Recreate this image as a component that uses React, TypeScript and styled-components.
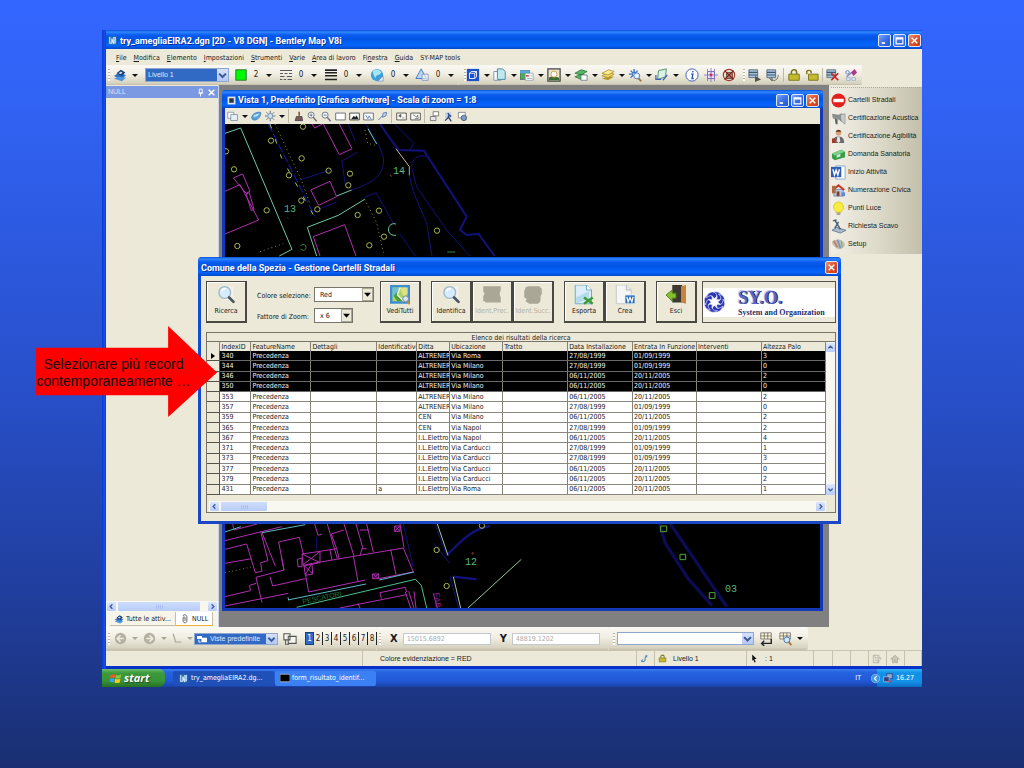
import React from "react";
import styled, { createGlobalStyle, css } from "styled-components";

const UI = '"DejaVu Sans Condensed", "DejaVu Sans", sans-serif';
const SANS = '"Liberation Sans", Arial, sans-serif';
const TITLE = 'Roboto, "Open Sans", sans-serif';
const BEIGE = "#ece9d8";

const GlobalStyle = createGlobalStyle`
  * { box-sizing: border-box; }
  body { margin: 0; font-family: ${UI}; font-size: 7px; line-height: 10px; color: #1a1a1a; }
  button, input, select { font: inherit; color: inherit; margin: 0; padding: 0; border: 0; background: none; border-radius: 0; }
  svg { display: block; flex: none; }
`;

const Slide = styled.div`
  position: relative;
  min-height: 100vh;
  padding: 30px 102px;
  background: linear-gradient(180deg, #3366ff 0%, #3163f5 12%, #2850cb 50%, #1f3c98 80%, #1a2f72 100%);
`;

const Screen = styled.div`
  position: relative;
`;

const AppWindow = styled.div`
  padding: 0 0 3px 4px;
  background: linear-gradient(90deg, #0a3ad8, #1a50e8 3px, #0831c9 4px);
`;

const TitleBar = styled.div<{ $h?: number }>`
  display: flex;
  align-items: center;
  gap: 2px;
  height: ${(p) => p.$h ?? 19}px;
  padding: 2px 1px 0 1px;
  color: #fff;
  font: 700 9px/12px ${TITLE};
  text-shadow: 1px 1px 0 #0a2f9c;
  background: linear-gradient(180deg, #0a50d8 0, #2f86ff 2px, #0b5cf0 5px, #0054e3 9px, #0566ff 15px, #0348c8 100%);
  span { flex: 1; white-space: nowrap; overflow: hidden; }
`;

const TitleButtons = styled.div`
  display: flex;
  gap: 2px;
`;

const WinButton = styled.button<{ $close?: boolean }>`
  width: 13px;
  height: 13px;
  border: 1px solid #dfe8fb;
  border-radius: 2px;
  background: ${(p) => (p.$close ? "linear-gradient(135deg,#f0906c,#e0512c 50%,#c23c18)" : "linear-gradient(135deg,#7da4f8,#3c71ea 50%,#2556cc)")};
  svg { margin: 1px; }
`;

const MenuBar = styled.nav`
  display: flex;
  gap: 7px;
  height: 16px;
  align-items: center;
  padding: 2px 0 0 10px;
  background: ${BEIGE};
`;

const MenuItem = styled.button`
  white-space: nowrap;
  u { text-underline-offset: 1px; }
`;

const Bar = styled.div`
  display: flex;
  background: ${BEIGE};
`;

const BarGroup = styled.div<{ $h?: number; $gap?: number; $lead?: number; $trail?: number }>`
  display: flex;
  align-items: center;
  gap: ${(p) => p.$gap ?? 2}px;
  height: ${(p) => p.$h ?? 20}px;
  padding: 0 ${(p) => p.$trail ?? 0}px 0 ${(p) => p.$lead ?? 2}px;
  border-radius: 0 2px 2px 0;
  background: linear-gradient(180deg, #faf9f4 0%, #f1efe3 45%, #d6d2bf 92%, #bfbba6 100%);
`;

const Grip = styled.i`
  width: 2px;
  height: 12px;
  background: repeating-linear-gradient(180deg, #b8b4a0 0 1px, #fff 1px 3px);
`;

const Sep = styled.i<{ $m?: number }>`
  width: 1px;
  height: 14px;
  margin: 0 ${(p) => p.$m ?? 0}px;
  background: #bdb9a6;
`;

const IconButton = styled.button<{ $w?: number }>`
  display: flex;
  align-items: center;
  justify-content: center;
  flex: none;
  width: ${(p) => p.$w ?? 16}px;
  height: 16px;
`;

const Caret = styled.i<{ $light?: boolean }>`
  flex: none;
  width: 9px;
  display: flex;
  justify-content: center;
  &::after {
    content: "";
    border: 3px solid transparent;
    border-top-color: ${(p) => (p.$light ? "#aaa696" : "#111")};
    border-bottom: 0;
  }
`;

const ValueTool = styled.button`
  display: flex;
  align-items: center;
  width: 45px;
  height: 16px;
  font-size: 8px;
  span { width: 16px; text-align: center; }
  svg { margin: 0 1px; }
`;

const DropTool = styled.button`
  display: flex;
  align-items: center;
  width: 27px;
  height: 16px;
  gap: 2px;
`;

const SelectBox = styled.span<{ $w: number; $h: number; $kind?: "blue" | "plain"; $icon?: boolean; $before?: number; $after?: number }>`
  position: relative;
  display: inline-flex;
  flex: none;
  width: ${(p) => p.$w}px;
  height: ${(p) => p.$h}px;
  margin: 0 ${(p) => p.$after ?? 0}px 0 ${(p) => p.$before ?? 0}px;
  select {
    appearance: none;
    width: 100%;
    height: 100%;
    padding: 0 12px 0 ${(p) => (p.$icon ? 15 : p.$kind === "plain" ? 5 : 2)}px;
    border: 1px solid ${(p) => (p.$kind === "plain" ? "#77746a" : "#8da7d0")};
    background: #fff;
    outline: none;
    ${(p) => p.$kind === "blue" && css`
      color: #dfe9fb;
      background: #316ac5;
      font-family: ${SANS};
    `}
  }
  svg { position: absolute; pointer-events: none; left: 3px; top: 1px; }
  svg:last-child {
    left: auto;
    right: 1px;
    height: calc(100% - 2px);
    width: 11px;
    background: ${(p) => (p.$kind === "plain" ? BEIGE : "linear-gradient(180deg,#d6e2fc,#b4c8f6)")};
    border: ${(p) => (p.$kind === "plain" ? "1px solid #aaa797" : "0")};
  }
`;

const Workspace = styled.div`
  display: grid;
  grid-template-columns: 113px minmax(0, 1fr) 93px;
  background: ${BEIGE};
`;

const LeftPanel = styled.aside`
  display: flex;
  flex-direction: column;
  border-right: 1px solid #c9d4ea;
  background: ${BEIGE};
`;

const PanelHeader = styled.header`
  display: flex;
  align-items: center;
  justify-content: space-between;
  height: 12px;
  margin-top: 1px;
  padding: 0 2px;
  color: #d8e2fa;
  background: #7b98e2;
  font-family: ${SANS};
`;

const PanelTools = styled.span`
  display: flex;
  gap: 2px;
`;

const PanelBody = styled.div`
  flex: 1;
`;

const HScroll = styled.div`
  display: flex;
  align-items: center;
  gap: 2px;
  height: 11px;
  padding: 0 1px;
  background: #f8f7f0;
`;

const ScrollButton = styled.button<{ $h?: number }>`
  display: grid;
  place-items: center;
  flex: none;
  width: 9px;
  height: ${(p) => p.$h ?? 9}px;
  border-radius: 1px;
  background: linear-gradient(180deg, #dbe6fe, #b9cdf8);
`;

const Thumb = styled.i<{ $w?: number }>`
  ${(p) => (p.$w ? `width: ${p.$w}px;` : "flex: 1; margin-right: 6px;")}
  display: flex;
  justify-content: center;
  align-items: center;
  height: 9px;
  border-radius: 1px;
  background: linear-gradient(180deg, #cdddfd, #b8ccf8);
  &::after { content: ""; width: 7px; height: 4px; background: repeating-linear-gradient(90deg, #a9c0f0 0 1px, transparent 1px 2px); }
`;

const Tabs = styled.div`
  display: flex;
  height: 15px;
  padding: 0 0 0 4px;
  background: #f7f5ea;
`;

const Tab = styled.button<{ $on?: boolean }>`
  display: flex;
  align-items: center;
  gap: 2px;
  height: 14px;
  padding: 0 4px;
  white-space: nowrap;
  border: solid #c2beaa;
  border-width: 0 1px 1px 0;
  ${(p) => p.$on && css`background: #fff; border-bottom: 1px solid #f0b030;`}
`;

const Mdi = styled.main`
  padding: 5px 6px 16px 3px;
  background: #808080;
`;

const ViewWindow = styled.section`
  padding: 0 3px 3px;
  background: #1238b8;
  border-radius: 4px 4px 0 0;
  & > div:first-child { margin: 0 -3px; padding: 2px 4px 0 5px; border-radius: 4px 4px 0 0; }
`;

const ViewTools = styled.div`
  display: flex;
  align-items: center;
  height: 16px;
  padding-left: 1px;
  background: ${BEIGE};
`;

const MapCanvas = styled.svg`
  width: 100%;
  height: 484px;
  background: #000;
`;

const Sidebar = styled.aside`
  padding: 2px 0 0 2px;
  background: ${BEIGE};
`;

const SideList = styled.div`
  display: flex;
  flex-direction: column;
  padding: 3px 0 1px;
  border-top: 1px dotted #b5a9a0;
  background: linear-gradient(90deg, #f1efe5, #dedbcb 50%, #c3bfaa);
`;

const SideItem = styled.button`
  display: flex;
  align-items: center;
  gap: 2px;
  height: 18px;
  text-align: left;
  white-space: nowrap;
  font: 7px/10px ${SANS};
`;

const Pager = styled.div`
  display: flex;
  margin-left: 3px;
`;

const PageButton = styled.button<{ $on?: boolean }>`
  width: 9px;
  height: 13px;
  border-right: 1px solid #222;
  font-size: 8px;
  ${(p) => p.$on && css`background: #316ac5; color: #fff; border: 1px solid #1c3c80;`}
`;

const Coord = styled.label`
  display: flex;
  align-items: center;
  gap: 5px;
  font: 700 11px/12px ${UI};
  margin-left: 7px;
  input {
    width: 88px;
    height: 12px;
    padding: 0 3px;
    border: 1px solid #c3c8cc;
    background: #fff;
    color: #aaa;
    font: 7px/10px ${UI};
  }
`;

const StatusBar = styled.footer`
  display: flex;
  height: 16px;
  border-top: 1px solid #c9c5b2;
  background: ${BEIGE};
  font: 7px/15px ${SANS};
`;

const StatusCell = styled.div<{ $w?: number; $pad?: number }>`
  display: flex;
  align-items: center;
  gap: 6px;
  ${(p) => (p.$w ? `width: ${p.$w}px;` : "flex: 1;")}
  padding-left: ${(p) => p.$pad ?? 3}px;
  border-right: 1px solid #c5c1ae;
  white-space: nowrap;
`;

const TaskBar = styled.div`
  display: flex;
  align-items: center;
  height: 18px;
  color: #fff;
  background: linear-gradient(180deg, #3a80f0 0, #2663e0 3px, #2058d8 12px, #1941a5 100%);
`;

const StartButton = styled.button`
  display: flex;
  align-items: center;
  gap: 2px;
  width: 63px;
  height: 18px;
  margin-right: 8px;
  padding-left: 8px;
  border-radius: 0 6px 6px 0;
  font: italic 700 11px/14px "Open Sans", sans-serif;
  text-shadow: 1px 1px 1px #1b4d1b;
  background: linear-gradient(180deg, #6cbc6c 0, #3c9a3c 4px, #379437 12px, #256f25 100%);
`;

const Task = styled.button<{ $on?: boolean }>`
  display: flex;
  align-items: center;
  gap: 2px;
  width: 101px;
  height: 15px;
  margin-right: 1px;
  padding-left: 5px;
  border-radius: 2px;
  white-space: nowrap;
  background: ${(p) => (p.$on ? "#3c81f3" : "#1e50b8")};
`;

const Tray = styled.div`
  display: flex;
  align-items: center;
  gap: 3px;
  height: 18px;
  width: 45px;
  background: linear-gradient(180deg, #35b4f4 0, #1290e8 4px, #1290e8 13px, #0d6cc0 100%);
  svg:first-child { margin-left: -6px; }
`;

const Lang = styled.span`
  margin: 0 16px 0 auto;
`;

/* Dialog */

const Dialog = styled.section`
  position: absolute;
  top: 227px;
  left: 96px;
  right: 81px;
  padding: 0 3px 3px;
  border-radius: 4px 4px 0 0;
  background: linear-gradient(180deg, #0a50d8, #1b46c4);
  & > div:first-child { margin: 0 -3px; padding: 2px 3px 0 3px; border-radius: 4px 4px 0 0; }
`;

const DialogBody = styled.div`
  padding: 5px 2px 8px 5px;
  background: ${BEIGE};
`;

const DialogTools = styled.div`
  display: flex;
  height: 42px;
`;

const ToolGroup = styled.div<{ $gap?: number }>`
  display: flex;
  flex: none;
  margin-right: ${(p) => p.$gap ?? 10}px;
`;

const BigButton = styled.button`
  display: flex;
  flex-direction: column;
  align-items: center;
  justify-content: space-between;
  width: 41px;
  height: 42px;
  padding: 3px 0 5px;
  border: solid #4a4842;
  border-width: 1px 2px 2px 1px;
  box-shadow: inset 1px 1px 0 #fff;
  background: ${BEIGE};
  white-space: nowrap;
  line-height: 9px;
  &:disabled { color: #b4b1a0; }
`;

const Fields = styled.div`
  display: grid;
  grid-template-columns: 57px 60px;
  grid-template-rows: 15px 15px;
  row-gap: 6px;
  padding-top: 6px;
  margin-right: 6px;
  label { padding-top: 4px; white-space: nowrap; }
`;

const LogoBox = styled.div`
  flex: 1;
  display: flex;
  align-items: center;
  border: 1px solid #55534c;
`;

const LogoInner = styled.div`
  display: flex;
  align-items: center;
  gap: 12px;
  width: 100%;
  height: 29px;
  background: #fff;
`;

const LogoText = styled.div`
  display: flex;
  flex-direction: column;
  font: 700 8px/9px "Liberation Serif", serif;
  color: #26306c;
  white-space: nowrap;
  strong {
    font-size: 18px;
    line-height: 20px;
    color: #5866c4;
    text-shadow: 1px 0 0 #1c2350, -1px -1px 0 #c5cbee;
  }
`;

const GridBox = styled.div`
  margin-top: 9px;
  border: 1px solid #77746a;
  background: ${BEIGE};
`;

const GridTitle = styled.div`
  height: 9px;
  text-align: center;
  line-height: 10px;
  border-bottom: 1px solid #77746a;
`;

const GridRow = styled.div`
  display: flex;
`;

const DataTable = styled.table`
  flex: 1;
  width: 0;
  height: 153px;
  table-layout: fixed;
  border-collapse: collapse;
  th, td {
    padding: 0 0 0 1px;
    overflow: hidden;
    white-space: nowrap;
    text-align: left;
    font-weight: 400;
    line-height: 8px;
    border-right: 1px solid #85827a;
  }
  th { height: 9px; }
`;

const Row = styled.tr<{ $sel?: boolean }>`
  background: ${(p) => (p.$sel ? "#000" : "#fff")};
  color: ${(p) => (p.$sel ? "#f0f0f0" : "#1a1a1a")};
  td { border-bottom: 1px solid ${(p) => (p.$sel ? "#6a6a6a" : "#8a877e")}; }
  td:first-child { background: ${BEIGE}; color: #000; padding: 0 0 0 4px; border-color: #55534c; }
`;

const VScroll = styled.div`
  display: flex;
  flex-direction: column;
  justify-content: space-between;
  width: 9px;
  padding-top: 1px;
  background: #f8f7f2;
`;

const GridFoot = styled.div`
  display: flex;
  padding: 6px 9px 0 2px;
  & > div { flex: 1; }
`;

const Spring = styled.i`
  flex: 1;
`;

const Arrow = styled.div`
  position: absolute;
  top: 326px;
  left: 36px;
  display: flex;
  align-items: center;
  justify-content: center;
  width: 181px;
  height: 91px;
  padding: 2px 26px 0 0;
  background: #fe0000;
  clip-path: polygon(0 24%, 73% 24%, 73% 0, 100% 51%, 73% 100%, 73% 76%, 0 76%);
`;

const ArrowText = styled.p`
  margin: 0;
  text-align: center;
  white-space: nowrap;
  color: #111;
  font: 14px/17px "Liberation Sans", Arial, sans-serif;
`;

/* Icons, all on a 16 unit grid */

const icons: Record<string, React.ReactNode> = {
  app: <><path d="M2 2h12v12H2z" fill="#2d6fa8" /><path d="M4 3v9h3V5l3 8V3m2 0v9" stroke="#cfeaff" strokeWidth="1.6" fill="none" /></>,
  view: <><path d="M1 1h14v14H1z" fill="#dfe6ef" /><path d="M4 4h8v8H4z" fill="#2b3340" /></>,
  min: <path d="M3 11h6v3H3z" fill="#fff" />,
  max: <path d="M2 3h12v11H2zM2 5h12" stroke="#fff" strokeWidth="2" fill="none" />,
  close: <path d="M3 3l10 10M13 3L3 13" stroke="#fff" strokeWidth="2.6" />,
  pin: <path d="M6 2h5v7H6zM4 9h9M8 9v6" stroke="#fff" strokeWidth="1.6" fill="none" />,
  left: <path d="M10 3L5 8l5 5" stroke="#3c5a94" strokeWidth="3" fill="none" />,
  right: <path d="M6 3l5 5-5 5" stroke="#3c5a94" strokeWidth="3" fill="none" />,
  up: <path d="M3 10l5-5 5 5" stroke="#3c5a94" strokeWidth="3" fill="none" />,
  down: <path d="M3 6l5 5 5-5" stroke="#3c5a94" strokeWidth="3" fill="none" />,
  active: <><path d="M1 9l5-3 9 2-5 5z" fill="#2f6fc0" /><path d="M1 12l5-2 9 1-5 4z" fill="#4d94dd" /><path d="M4 6l5-4 5 3-4 4z" fill="#17366e" /><path d="M6 6l3-2 2 1-2 2z" fill="#bcd8f4" /></>,
  green: <path d="M1 1h14v14H1z" fill="#00f800" stroke="#1c5a1c" />,
  dash: <path d="M0 2h16M0 6h4m2 0h4m2 0h4M0 10h6m3 0h7M0 14h3m2 0h3m2 0h6" stroke="#555" strokeWidth="1.3" />,
  weight: <path d="M0 1.5h16M0 5h16M0 9h16M0 14h16" stroke="#222" strokeWidth="2.2" />,
  globe: <><circle cx="8" cy="8" r="7" fill="#3b9fd8" /><path d="M3 4c4-4 8-2 10 1-2 4-6 2-6 5s-3 0-4-6z" fill="#a9e6f0" /><path d="M9 15l6-6v6z" fill="#e8eef6" stroke="#6b86b8" strokeWidth=".8" /></>,
  viewglobe: <><path d="M1 9C2 4 8 1 14 2c1 4-2 9-7 11-4 1-6-1-6-4z" fill="#58a4dc" stroke="#3a6ea8" /><path d="M3 8c2-3 6-4 9-4-2 4-5 5-9 4z" fill="#c4e6f6" /></>,
  tri: <><path d="M7 1l6 11H1z" fill="#bcd6f6" stroke="#3c6fc0" /><path d="M8 7h7v7H8z" fill="#fff" fillOpacity=".6" stroke="#7a94c0" /></>,
  cube: <><path d="M1 1h14v14H1z" fill="#1c51c8" /><path d="M4 6h6v6H4zM4 6l2-2h6v6l-2 2M10 6l2-2" stroke="#fff" strokeWidth="1" fill="none" /></>,
  doc: <><path d="M1 4h8v10H1z" fill="#fff" stroke="#7a8ca8" /><path d="M5 1h6l3 3v9H5z" fill="#bfe9ef" stroke="#3d7f98" /></>,
  refs: <><path d="M0 3h11v10H0z" fill="#4fa860" stroke="#456" strokeWidth=".8" /><path d="M0 3h11v3H0z" fill="#58a8e0" /><path d="M6 6h9v8H6z" fill="#fff" stroke="#789" strokeWidth=".7" /><path d="M7 8h3v2H7z" fill="#d44" /><path d="M11 9h3m-6 3h6" stroke="#89a" strokeWidth=".8" /></>,
  raster: <><path d="M1 1h14v14H1z" fill="#e9e4cc" stroke="#444" strokeWidth="1.4" /><path d="M2 11l4-2 8 2v3H2z" fill="#3d6b35" /><circle cx="8" cy="7" r="3.5" fill="#fff" stroke="#caa040" /></>,
  points: <><path d="M1 6l7-4 7 2-7 4zM1 10l7-3 7 2-7 4z" fill="#52b862" stroke="#256c34" strokeWidth=".8" /><path d="M8 8h7v6H8z" fill="#fff" stroke="#567" strokeWidth=".8" /></>,
  layers: <><path d="M1 12l8-3 6 1-7 4z" fill="#b89a2c" /><path d="M1 9l8-4 6 2-7 4z" fill="#f0d860" stroke="#a4862a" strokeWidth=".8" /><path d="M1 6l8-4 6 2-7 4z" fill="#fbeb92" stroke="#a4862a" strokeWidth=".8" /></>,
  burst: <><path d="M7 1v5M1 7h5M3 3l3 3M11 3L8 6M3 11l3-3" stroke="#3b74c0" strokeWidth="1.6" /><circle cx="10" cy="9" r="3.4" fill="#e6f2ff" stroke="#456fb0" /><path d="M12 12l3 3" stroke="#8a6a3a" strokeWidth="2" /></>,
  map3d: <><path d="M4 3l9-2-1 9-9 3z" fill="#dff0e6" stroke="#3f8a62" /><path d="M1 8v5h6M9 14l5-6" stroke="#3e63b8" strokeWidth="1.4" fill="none" /></>,
  info: <><circle cx="8" cy="8" r="7" fill="#fff" stroke="#3c63b8" strokeWidth="1.1" /><path d="M9 3.5v1.600M7 7h2l-1 5h2" stroke="#2a4fae" strokeWidth="1.5" fill="none" /></>,
  accu: <><path d="M4 4h8v8H4z" fill="#e6dff6" stroke="#6a61b0" /><path d="M8 0v16M0 8h16M4 1v3m8-3v3M4 12v3m8-3v3" stroke="#8a76c0" /><circle cx="8" cy="8" r="1.6" fill="#d03060" /></>,
  nosnap: <><path d="M5 5h7v7H5z" fill="#b87a6a" stroke="#5a2a20" strokeWidth=".8" /><circle cx="8" cy="8" r="6.5" fill="none" stroke="#a23a30" strokeWidth="1.3" /><path d="M3 3l10 10M13 3L3 13" stroke="#6e2018" strokeWidth="1.2" /></>,
  db: <><path d="M1 2h10v9H1z" fill="#a8c4dc" stroke="#3d5368" strokeWidth=".8" /><path d="M1 5h10M1 8h10" stroke="#3d5670" strokeWidth="1.2" /><path d="M8 9l7 4-7 3z" fill="#555" /></>,
  db2: <><path d="M1 2h10v9H1z" fill="#a8c4dc" stroke="#3d5368" strokeWidth=".8" /><path d="M1 5h10M1 8h10" stroke="#3d5670" strokeWidth="1.2" /><path d="M6 13c4 3 8 0 8-5M4 12l3-1v4z" stroke="#666" fill="none" /></>,
  lock: <><path d="M5 7V5a3 3 0 016 0v2" stroke="#7a7420" strokeWidth="1.8" fill="none" /><path d="M2 7h12v7H2z" fill="#c3b92c" stroke="#77701a" /></>,
  unlock: <><path d="M2 7V4a3 3 0 015 0v2" stroke="#7a7420" strokeWidth="1.6" fill="none" /><path d="M4 7h11v7H4z" fill="#c3b92c" stroke="#77701a" /></>,
  dbx: <><path d="M1 2h10v9H1z" fill="#a8c4dc" stroke="#3d5368" strokeWidth=".8" /><path d="M1 5h10M1 8h10" stroke="#3d5670" strokeWidth="1.2" /><path d="M6 6l8 8M14 6l-8 8" stroke="#d02020" strokeWidth="2" /></>,
  tools: <><path d="M3 10l6-5" stroke="#8a8ac0" strokeWidth="1.6" /><path d="M8 5l4-4 3 4-4 4z" fill="#b0398c" /><circle cx="4" cy="5" r="2" fill="#e8ecf8" stroke="#5a76c0" /><path d="M9 11h4v3H9zM3 11h4v3H3z" fill="#e8eef8" stroke="#8a9ac0" strokeWidth=".8" /></>,
  pages: <><path d="M1 3h8v8H1z" fill="#fff" stroke="#7888a0" /><path d="M5 6h9v8H5z" fill="#e8eef8" stroke="#7888a0" /></>,
  brushsm: <><path d="M9 1v6" stroke="#8a5a2a" strokeWidth="2.4" /><path d="M5 8h8l1 6H3z" fill="#7a5a58" stroke="#3d3338" /></>,
  sun: <><circle cx="7" cy="8" r="3.4" fill="#cfe0f4" stroke="#5a7898" /><path d="M7 1v3m0 8v3M0 8h3m8 0h3M2 3l2 2m6 6l2 2M2 13l2-2m6-6l2-2" stroke="#5a6a80" strokeWidth="1.2" /></>,
  zin: <><circle cx="6" cy="6" r="4.4" fill="#eef6ff" stroke="#6a7078" strokeWidth="1.3" /><path d="M4 6h4M6 4v4" stroke="#446" /><path d="M9 9l5 6" stroke="#777" strokeWidth="2.2" /></>,
  zout: <><circle cx="6" cy="6" r="4.4" fill="#eef6ff" stroke="#6a7078" strokeWidth="1.3" /><path d="M4 6h4" stroke="#446" /><path d="M9 9l5 6" stroke="#777" strokeWidth="2.2" /></>,
  rect: <path d="M1 3h14v10H1z" fill="#fff" stroke="#555a70" strokeWidth="1.2" />,
  fit: <><path d="M1 3h14v10H1z" fill="#fff" stroke="#333" strokeWidth="1.2" /><path d="M3 12l4-5 2 2 2-3 3 6z" fill="#222" /></>,
  fitb: <><path d="M1 3h14v10H1z" fill="#fff" stroke="#555a70" strokeWidth="1.2" /><path d="M4 6l3 5 2-4 3 5" fill="none" stroke="#5577b0" strokeWidth="1.3" /></>,
  wand: <path d="M2 13l6-6M8 7l1-4 5-1-1 5-5 2z" fill="#c4d8f4" stroke="#5a74a8" strokeWidth="1.3" />,
  prev: <><path d="M1 3h14v10H1z" fill="#f8f8f4" stroke="#444" strokeWidth="1.2" /><path d="M4 7l3-2v4zM9 10h3" fill="#333" stroke="#555" /></>,
  next: <><path d="M1 3h14v10H1z" fill="#f8f8f4" stroke="#444" strokeWidth="1.2" /><path d="M4 5l6 4 1-3 1 5-5 0" fill="none" stroke="#555" /></>,
  copyv: <><path d="M6 1h8v6H6z" fill="#fff" stroke="#555" /><path d="M2 8h8v6H2z" fill="#e9e5f0" stroke="#555" /></>,
  walk: <><path d="M3 2h9v8H3z" fill="#bcd2ee" /><path d="M7 3l2 3-2 4-4 4M9 6l3 2M8 9l4 6" stroke="#25406f" strokeWidth="1.8" fill="none" /></>,
  clip: <><path d="M2 2h10v8H2z" fill="#fff" stroke="#667" /><circle cx="10" cy="10" r="4" fill="#7a9cc8" stroke="#445" /></>,
  back: <><circle cx="8" cy="8" r="7" fill="#b4b1a2" /><path d="M12 8H5m3-4L4 8l4 4" stroke="#eeece0" strokeWidth="2" fill="none" /></>,
  fwd: <><circle cx="8" cy="8" r="7" fill="#b4b1a2" /><path d="M4 8h7M8 4l4 4-4 4" stroke="#eeece0" strokeWidth="2" fill="none" /></>,
  axis: <path d="M3 1l3 11h8" stroke="#aaa696" strokeWidth="1.6" fill="none" />,
  views: <><path d="M1 2h7v7H1zM6 5h9v8H6zM3 9v5h4" fill="#f6f4ec" stroke="#555" strokeWidth="1.2" /></>,
  viewset: <><path d="M0 3h8v5H0zM7 6h9v7H7z" fill="#fff" /><path d="M3 9v4h3" stroke="#fff" strokeWidth="1.5" fill="none" /></>,
  keyin: <><path d="M2 1h12v7H2zM2 4.500h12M6 1v7M10 1v7" fill="#fff6d8" stroke="#555" strokeWidth=".8" /><path d="M14 8v5H3m3-3l-3 3 3 3" stroke="#222" strokeWidth="1.6" fill="none" /></>,
  keyfind: <><path d="M1 1h12v7H1zM1 4.500h12M5 1v7M9 1v7" fill="#fff6d8" stroke="#555" strokeWidth=".8" /><circle cx="9" cy="9" r="3.400" fill="#cfe8ff" stroke="#3a6ea8" /><path d="M11 11l3 4" stroke="#a8702c" strokeWidth="2" /></>,
  link: <path d="M2 13c6 2 8-2 7-6l4-4M2 13l3-3M13 3l-4 1" stroke="#4d8ac8" strokeWidth="2" fill="none" />,
  cursor: <path d="M4 1l8 8H8l2 5-2 1-2-5-2 2z" fill="#111" />,
  saveg: <path d="M2 2h9v12H2zM5 2v4h5M11 6h3v3M5 10h5v4" fill="#e4e1d2" stroke="#a5a294" />,
  homeg: <path d="M1 8l7-6 7 6h-3v6H9v-4H7v4H4V8z" fill="#c9c6b8" stroke="#a5a294" />,
  flag: <><path d="M1 4c2-2 4-1 6 0L6 8C4 7 2 7 0 8z" fill="#f05a28" /><path d="M8 4c2 1 4 1 7-1l-1 5c-2 1-5 1-7 0z" fill="#8cc63e" /><path d="M0 9c2-1 4-1 6 0l-1 5c-2-1-4-1-6 0z" fill="#3ba0f0" /><path d="M7 9c2 1 5 1 7 0l-1 5c-3 1-5 1-7 0z" fill="#fcc820" /></>,
  console: <path d="M0 2h16v12H0z" fill="#000" stroke="#d8d8d8" />,
  chev: <><circle cx="8" cy="8" r="7.500" fill="#3a94e8" stroke="#bfe2fc" /><path d="M10 4L6 8l4 4" stroke="#fff" strokeWidth="2.200" fill="none" /></>,
  net: <><path d="M6 1h9v8H6z" fill="#8fa6d8" stroke="#1e2c60" /><path d="M1 6h9v8H1z" fill="#31407c" stroke="#c8d2f0" /><path d="M9 12h5v3H9z" fill="#c04060" /></>,
  clipb: <path d="M5 3c0-3 6-2 6 1v7c0 4-6 4-6 0V6c0-2 3-2 3 0v5" stroke="#666" strokeWidth="1.600" fill="none" />,
  stop: <><circle cx="8" cy="8" r="7.500" fill="#e2201c" /><path d="M2.500 6.200h11v3.600h-11z" fill="#fff" /></>,
  horn: <><path d="M1 3l7 1 4-2v10L8 9 2 8z" fill="#8c8f92" /><path d="M10 4l5-1v11l-4-3z" fill="#c9cccf" stroke="#808488" strokeWidth=".6" /><path d="M4 8l3 1v5H5z" fill="#5c6064" /></>,
  person: <><circle cx="8" cy="4" r="3" fill="#d8a078" /><path d="M5 3c1-3 5-3 6 0z" fill="#5a3420" /><path d="M2 15c0-6 3-7 6-7s6 1 6 7z" fill="#6c6a6e" /><path d="M7 8h2l1 5-2 2-2-2z" fill="#e8e4e0" /><path d="M1 10h4v5H1z" fill="#a33c2a" /></>,
  money: <><path d="M1 7l10-4 4 2v6l-11 3-3-2z" fill="#3c9c4c" /><path d="M1 7l10-4 4 2-11 4z" fill="#7ed08a" /><path d="M6 8.500l4-1.300v3L6 11.500z" fill="#c4ecc8" /></>,
  word: <><path d="M5 1h10v14H5z" fill="#fff" stroke="#8aa4d0" /><path d="M0 2h11v11H0z" fill="#2d5fb4" /><path d="M2 4.500l1.700 6 1.800-5 1.800 5 1.700-6" stroke="#fff" strokeWidth="1.500" fill="none" /></>,
  house: <><path d="M3 7h10v7H3z" fill="#b8cbe6" stroke="#5a6ea0" strokeWidth=".7" /><path d="M1 7l7-6 7 6-2 1-5-4-5 4z" fill="#c43a2a" /><path d="M1 3h4v8H1z" fill="#b06a40" /><path d="M6 9h3v5H6z" fill="#7a4028" /><path d="M11 10h4v4h-4z" fill="#6b86c8" /></>,
  bulb: <><path d="M8 1a5.500 5.500 0 013 10v1H5v-1A5.500 5.500 0 018 1z" fill="#f8ec3c" stroke="#d8c420" strokeWidth=".8" /><path d="M6 12h4v3H6z" fill="#a8a898" /></>,
  dig: <><path d="M1 12l5-3 10 3-6 3z" fill="#a8bcd0" stroke="#5a6c84" strokeWidth=".8" /><path d="M4 1l6 10M8 3l-4 7M2 2l4-1" stroke="#4c5c74" strokeWidth="1.500" /></>,
  palette: <><path d="M1 5c4-4 12-3 14 3-1 5-7 6-9 4S1 9 1 5z" fill="#c4c0b0" /><path d="M3 4l4 7" stroke="#c07a6a" strokeWidth="1.800" /><path d="M7 3l3 9" stroke="#6c94c4" strokeWidth="1.800" /><path d="M11 4l1 7" stroke="#8ab080" strokeWidth="1.400" /></>,
  search: <><path d="M5 1h9v11H5z" fill="#f4f4f0" opacity=".8" /><circle cx="7" cy="6" r="4.700" fill="#d6ecfa" stroke="#a4b8c8" strokeWidth="1.100" /><path d="M4.500 5c.5-1.600 2-2.200 3.400-2" stroke="#fff" strokeWidth="1.200" fill="none" /><path d="M10.500 10l3.500 3.500" stroke="#4c5660" strokeWidth="2.200" strokeLinecap="round" /></>,
  map: <><path d="M0 0h16v15H0z" fill="#3f8fd0" /><path d="M2 2h12v11H2z" fill="#a8d468" /><path d="M2 2l5 0-1 5-4 3z" fill="#6cc0dc" /><path d="M8 2h6v5l-3 3z" fill="#e0e088" /><path d="M5 6l5 7H6L3 9z" fill="#4d9c3e" /><path d="M8 2l-2 6 5 5" stroke="#f4f4d8" fill="none" /><circle cx="12.500" cy="11" r="2.300" fill="#cfe8f8" stroke="#889" strokeWidth=".8" /><path d="M14 13l1.500 2.500" stroke="#c89030" strokeWidth="1.500" /></>,
  blob: <path d="M1 1h14v3l-1 3 1 3v4H3l-1-1H1v-4l1-2-1-2z" fill="#aaa796" />,
  blob2: <path d="M2 2l2-1h9l2 2v4l-1 2v4l-2 2H5l-3-2 1-2-2-1V5z" fill="#aaa796" />,
  excel: <><path d="M1 0h9l4 4v11H1z" fill="#d9eef8" stroke="#7aa8c4" strokeWidth=".8" /><path d="M10 0v4h4" fill="#fff" stroke="#7aa8c4" strokeWidth=".8" /><path d="M1.500 10L12 5v6l-10 3.500z" fill="#b4dcea" /><path d="M8 10l7 5M15 10l-7 5" stroke="#3f9a3a" strokeWidth="2" /></>,
  worddoc: <><path d="M1 0h8l4 4v11H1z" fill="#f6f6f4" stroke="#c4c8cc" strokeWidth=".8" /><path d="M9 0v4h4" fill="#e4e6e8" stroke="#b8bcc0" strokeWidth=".8" /><path d="M8 8h8v7H8z" fill="#2f6fb4" stroke="#e8f0fa" strokeWidth=".6" /><path d="M9.500 9.500l1 4 1.500-3.500 1.500 3.500 1-4" stroke="#fff" fill="none" /></>,
  exit: <><path d="M5 0h8v14H5z" fill="#3c3834" /><path d="M12 1l4-1v15l-4-1z" fill="#c8843c" /><path d="M0 8l5-4v2.500h3v4H5V13z" fill="#86c02c" stroke="#4d7c14" strokeWidth=".7" /></>,
};

type IconProps = { n: string; s?: number };
const Icon = ({ n, s = 14 }: IconProps) => (
  <svg width={s} height={s} viewBox="0 0 16 16" aria-hidden="true">{icons[n]}</svg>
);

const WindowButtons = () => (
  <TitleButtons>
    <WinButton aria-label="Riduci"><Icon n="min" s={9} /></WinButton>
    <WinButton aria-label="Ingrandisci"><Icon n="max" s={9} /></WinButton>
    <WinButton $close aria-label="Chiudi"><Icon n="close" s={9} /></WinButton>
  </TitleButtons>
);

type PickProps = {
  label: string; id: string; w: number; h: number; kind?: "blue" | "plain";
  options: string[]; icon?: string; before?: number; after?: number;
};
const Pick = ({ label, id, w, h, kind, options, icon, before, after }: PickProps) => (
  <SelectBox $w={w} $h={h} $kind={kind} $icon={!!icon} $before={before} $after={after}>
    <select id={id} aria-label={label}>
      {options.map((o) => <option key={o}>{o}</option>)}
    </select>
    {icon && <Icon n={icon} s={10} />}
    <svg viewBox="0 0 16 16" aria-hidden="true">
      {kind === "plain" ? <path d="M2 5h12l-6 7z" fill="#000" /> : icons.down}
    </svg>
  </SelectBox>
);

const menus: [string, string, string][] = [
  ["", "F", "ile"], ["", "M", "odifica"], ["", "E", "lemento"], ["", "I", "mpostazioni"], ["", "S", "trumenti"],
  ["", "V", "arie"], ["", "A", "rea di lavoro"], ["Fi", "n", "estra"], ["", "G", "uida"], ["SY-MAP tools", "", ""],
];

const values: [string, string, number][] = [["green", "2", 12], ["dash", "0", 12], ["weight", "0", 12], ["globe", "0", 14], ["tri", "0", 14]];
const drops = ["cube", "doc", "refs", "raster", "points", "layers", "burst", "map3d"];

const sideItems: [string, string][] = [
  ["stop", "Cartelli Stradali"], ["horn", "Certificazione Acustica"], ["person", "Certificazione Agibilità"],
  ["money", "Domanda Sanatoria"], ["word", "Inizio Attività"], ["house", "Numerazione Civica"],
  ["bulb", "Punti Luce"], ["dig", "Richiesta Scavo"], ["palette", "Setup"],
];

const columns: [string, number][] = [
  ["", 13], ["IndexID", 31], ["FeatureName", 60], ["Dettagli", 66], ["Identificativo", 40], ["Ditta", 33],
  ["Ubicazione", 53], ["Tratto", 65], ["Data Installazione", 65], ["Entrata In Funzione", 64], ["Interventi", 65], ["Altezza Palo", 64],
];

const OLD = ["27/08/1999", "01/09/1999"];
const NEW = ["06/11/2005", "20/11/2005"];
const records: [string, string, string, string[], string][] = [
  ["340", "ALTRENER", "Via Roma", OLD, "3"],
  ["344", "ALTRENER", "Via Milano", OLD, "0"],
  ["346", "ALTRENER", "Via Milano", NEW, "2"],
  ["350", "ALTRENER", "Via Milano", NEW, "0"],
  ["353", "ALTRENER", "Via Milano", NEW, "2"],
  ["357", "ALTRENER", "Via Milano", OLD, "0"],
  ["359", "CEN", "Via Milano", NEW, "2"],
  ["365", "CEN", "Via Napol", OLD, "2"],
  ["367", "I.L.Elettro", "Via Napol", NEW, "4"],
  ["371", "I.L.Elettro", "Via Carducci", OLD, "1"],
  ["373", "I.L.Elettro", "Via Carducci", OLD, "3"],
  ["377", "I.L.Elettro", "Via Carducci", NEW, "0"],
  ["379", "I.L.Elettro", "Via Carducci", NEW, "2"],
  ["431", "I.L.Elettro", "Via Roma", NEW, "1"],
];

const lamps = [
  [249, 20], [153, 62], [18, 94], [42, 148], [245, 115], [207, 166], [326, 152], [390, 161], [385, 196],
  [244, 242], [292, 268], [140, 271], [52, 378], [413, 285], [477, 272], [492, 350], [448, 376], [651, 332],
];

const CityMap = () => (
  <MapCanvas viewBox="225 124 596 484" preserveAspectRatio="xMinYMin slice" role="img" aria-label="Mappa">
    <g transform="translate(220 120) scale(.3333)" fill="none" strokeWidth="3">
      <g stroke="#12127c">
        <path d="M145 12l140 278" stroke="#1c1cc0" strokeDasharray="26 8" />
        <path d="M480 12l55 78 77 2 128 198-20 40 20 15 36-3 48 66" strokeWidth="6" />
        <path d="M524 12l24 24 34 34-12 20M568 166l12 49 40 95 16 98M620 112c-30-16-50 16-44 34l14 54 90 130 70 78" />
        <path d="M395 210c75-25 100-50 95-100l-12-30-40-68M434 232l34-14 52 92M540 342l46 66M362 125l50-28M366 125l10 70M385 12l20 50M240 180l90-30M300 266l50-20" />
      </g>
      <g stroke="#8c8c3c" strokeDasharray="3 9">
        <path d="M165 12l80 170 25 70M434 238l36 70 22 98M435 30l8 40 24 6M120 395l70-24" />
      </g>
      <path d="M150 12l14 40 20 60 100 180" stroke="#a8c070" strokeDasharray="14 34" />
      <g stroke="#70c8a8">
        <path d="M15 40l47-16 154 364-38 20M290 408l-28-86 93-36 79-48M350 228l45-18M444 26l26 46M568 140v26M528 312c-28-8-32 38 0 34" />
        <path d="M528 86l40 54" stroke="#c8b8a0" />
      </g>
      <g stroke="#b030b0">
        <path d="M276 12l8 12 24-12M310 12l48 92 38-18-38-74M272 210l58-26 20 46-54 26zM40 174l28-12 22 52-12 6zM78 222l10-4 14 50-8 4zM15 214l45-20 56 106-101 42M300 408l-20-58 94-36 34 94" />
      </g>
      <g stroke="#a8b850">{lamps.map(([x, y]) => <circle key={`${x}-${y}`} cx={x} cy={y} r="8" />)}</g>
      <path d="M242 378c4-8 16-6 16 4s-12 12-16 4M682 396h24" stroke="#3c8c3c" />
      <path d="M201 292l4 4M510 166l6 3" stroke="#8a3a20" />
    </g>
    <g transform="translate(220 520) scale(.3333)" fill="none" strokeWidth="3">
      <g stroke="#12127c">
        <path d="M680 106c50-50 80-80 130-88M700 170l70 8" strokeWidth="7" />
        <path d="M645 12l35 94M690 170l26 94M550 12l30 130M640 70l50 60M290 50v40" />
      </g>
      <g stroke="#b030b0">
        <path d="M15 62l170-42M38 12l4 18 70-18M15 88l65-16 26 86 20-4-4-26 22-6-22-88M15 130l80-14M126 38l40 100M108 172l84-22-16-84 62-14 12 50M108 172l18 76M15 258l190-38M15 230l76-18-2-16 20-6M150 170l8 28 98-22M192 150l-8-40" />
        <path d="M246 102l54-8v34l-50 10zM246 102l54 26M300 94l-50 40M252 136l24-6 2 32-22 4zM252 136l26 26M276 130l-20 34M232 118l14-4v26h-12zM256 160l10 56M266 216l170-36" />
        <path d="M278 130l272-46 30 72-104 20M300 94l50-8-16-44 38-12M284 12l10 34 12-4M350 86l8 32M330 90l6 30M322 12l30 104M372 12l30 96M400 108l14 76M408 12l20 70-8 24M440 12l20 84M540 12l12 70M512 88l16 76M420 30h26M426 86h14" />
        <path d="M524 18h16v16h-16zM524 18l16 16M540 18l-16 16M458 162h18v14h-18zM458 162l18 14M476 162l-18 14" />
        <path d="M360 264l200-40M480 218l76-16 4 14M480 218l4 18M556 216l16 48M566 214l16 50M582 214l6 50M420 264l-6-14M640 220l12 44" />
      </g>
      <g stroke="#60b8c8">
        <path d="M15 36l48-16M126 38l130-24M204 240l234-48M478 180l104-24M204 232l2 8" />
        <path d="M230 262l356-84 18 18 16 68" stroke="#48c090" />
        <path d="M744 264l160-146" stroke="#90c8a0" />
        <path d="M652 12l32 94M700 170l22 94" stroke="#a8c890" />
      </g>
      <path d="M15 158l84-18" stroke="#6c8030" strokeDasharray="3 8" />
      <g stroke="#a8b850"><circle cx="650" cy="90" r="8" /><circle cx="680" cy="198" r="8" /><circle cx="786" cy="17" r="8" /></g>
      <circle cx="758" cy="100" r="2" stroke="#a04020" />
    </g>
    <g transform="translate(600 480) scale(.3333)" fill="none" strokeWidth="3">
      <path d="M178 130l18 60 70 108 70 78M210 130l170 250" stroke="#0c0c54" strokeWidth="10" />
      <path d="M182 138h18v17h-18zM240 223h17v16h-17zM328 338h17v17h-17z" stroke="#50a838" />
    </g>
    <g fontFamily="Liberation Mono, monospace" fontSize="10" fill="#58b880">
      <text x="284" y="212">13</text>
      <text x="393" y="174">14</text>
      <text x="465" y="565">12</text>
      <text x="725" y="592">03</text>
    </g>
    <text transform="translate(303 604) rotate(-12)" fontFamily="Liberation Sans" fontSize="7" fill="#1f7a3c">PESCATORI</text>
    <text transform="translate(434 593) rotate(84)" fontFamily="Liberation Sans" fontSize="8" fill="#902090">FAB</text>
  </MapCanvas>
);

const Swirl = () => (
  <svg width="23" height="24" viewBox="-12 -12 24 24" aria-hidden="true">
    {[0, 45, 90, 135, 180, 225, 270, 315].map((a) => (
      <path key={a} transform={`rotate(${a})`} d="M2 -3C4 -6 2 -9 -3 -9C2 -13 9 -9 7 -4C6 -2 4 -2 2 -3z" fill="#2a34b4" stroke="#e4e8fa" strokeWidth=".7" />
    ))}
    <circle r="2" fill="#fff" />
  </svg>
);

const Big = ({ n, children, disabled }: { n: string; children: string; disabled?: boolean }) => (
  <BigButton disabled={disabled}><Icon n={n} s={20} />{children}</BigButton>
);

const ResultsDialog = () => (
  <Dialog>
    <TitleBar>
      <span>Comune della Spezia - Gestione Cartelli Stradali</span>
      <WinButton $close aria-label="Chiudi"><Icon n="close" s={9} /></WinButton>
    </TitleBar>
    <DialogBody>
      <DialogTools>
        <ToolGroup><Big n="search">Ricerca</Big></ToolGroup>
        <Fields>
          <label htmlFor="colore">Colore selezione:</label>
          <Pick id="colore" label="Colore selezione" w={60} h={15} kind="plain" options={["Red", "Green", "Blue"]} />
          <label htmlFor="zoom">Fattore di Zoom:</label>
          <Pick id="zoom" label="Fattore di Zoom" w={39} h={15} kind="plain" options={["x 6", "x 8"]} />
        </Fields>
        <ToolGroup><Big n="map">VediTutti</Big></ToolGroup>
        <ToolGroup>
          <Big n="search">Identifica</Big>
          <Big n="blob" disabled>Ident.Prec.</Big>
          <Big n="blob2" disabled>Ident.Succ.</Big>
        </ToolGroup>
        <ToolGroup><Big n="excel">Esporta</Big><Big n="worddoc">Crea</Big></ToolGroup>
        <ToolGroup $gap={5}><Big n="exit">Esci</Big></ToolGroup>
        <LogoBox>
          <LogoInner>
            <Swirl />
            <LogoText><strong>SY.O.</strong>System and Organization</LogoText>
          </LogoInner>
        </LogoBox>
      </DialogTools>
      <GridBox>
        <GridTitle>Elenco dei risultati della ricerca</GridTitle>
        <GridRow>
          <DataTable>
            <colgroup>{columns.map(([c, w]) => <col key={c} style={{ width: `${(w / 619) * 100}%` }} />)}</colgroup>
            <thead><tr>{columns.map(([c]) => <th key={c} scope="col">{c}</th>)}</tr></thead>
            <tbody>
              {records.map(([id, ditta, via, dates, palo], i) => (
                <Row key={id} $sel={i < 4}>
                  <td>{i === 0 && <svg width="5" height="6" viewBox="0 0 5 6"><path d="M0 0l4 3-4 3z" /></svg>}</td>
                  <td>{id}</td>
                  <td>Precedenza</td>
                  <td />
                  <td>{id === "431" ? "a" : ""}</td>
                  <td>{ditta}</td>
                  <td>{via}</td>
                  <td />
                  <td>{dates[0]}</td>
                  <td>{dates[1]}</td>
                  <td />
                  <td>{palo}</td>
                </Row>
              ))}
            </tbody>
          </DataTable>
          <VScroll>
            <ScrollButton aria-label="Su"><Icon n="up" s={7} /></ScrollButton>
            <ScrollButton $h={11} aria-label="Giù"><Icon n="down" s={7} /></ScrollButton>
          </VScroll>
        </GridRow>
        <GridFoot>
          <HScroll>
            <ScrollButton aria-label="Sinistra"><Icon n="left" s={7} /></ScrollButton>
            <Thumb $w={46} />
            <Spring />
            <ScrollButton aria-label="Destra"><Icon n="right" s={7} /></ScrollButton>
          </HScroll>
        </GridFoot>
      </GridBox>
    </DialogBody>
  </Dialog>
);

export default function App() {
  return (
    <Slide>
      <GlobalStyle />
      <Screen>
        <AppWindow>
          <TitleBar>
            <Icon n="app" s={11} />
            <span>try_amegliaEIRA2.dgn [2D - V8 DGN] - Bentley Map V8i</span>
            <WindowButtons />
          </TitleBar>
          <MenuBar>
            {menus.map(([a, u, b]) => <MenuItem key={a + u + b}>{a}<u>{u}</u>{b}</MenuItem>)}
          </MenuBar>
          <Bar>
            <BarGroup $gap={0}>
              <Grip />
              <IconButton $w={20} aria-label="Attributi"><Icon n="active" /></IconButton>
              <Caret />
              <Pick id="livello" label="Livello" w={84} h={14} kind="blue" before={6} after={5} options={["Livello 1", "Livello 2"]} />
              {values.map(([n, v, s]) => (
                <ValueTool key={n}><Icon n={n} s={s} /><span>{v}</span><Caret /></ValueTool>
              ))}
            </BarGroup>
            <BarGroup $gap={0} $lead={5}>
              <Grip />
              {drops.map((n) => <DropTool key={n} aria-label={n}><Icon n={n} /><Caret /></DropTool>)}
              <IconButton $w={19} aria-label="Informazioni"><Icon n="info" /></IconButton>
              <IconButton $w={19} aria-label="AccuDraw"><Icon n="accu" /></IconButton>
              <IconButton $w={18} aria-label="Snap"><Icon n="nosnap" /></IconButton>
            </BarGroup>
            <BarGroup $lead={5} $trail={3}>
              <Grip />
              <IconButton aria-label="Connetti"><Icon n="db" /></IconButton>
              <IconButton aria-label="Aggiorna"><Icon n="db2" /></IconButton>
              <Sep />
              <IconButton aria-label="Blocca"><Icon n="lock" /></IconButton>
              <IconButton aria-label="Sblocca"><Icon n="unlock" /></IconButton>
              <Sep />
              <IconButton aria-label="Elimina"><Icon n="dbx" /></IconButton>
              <IconButton aria-label="Strumenti"><Icon n="tools" /></IconButton>
            </BarGroup>
          </Bar>

          <Workspace>
            <LeftPanel>
              <PanelHeader>NULL<PanelTools><Icon n="pin" s={9} /><Icon n="close" s={9} /></PanelTools></PanelHeader>
              <PanelBody />
              <HScroll>
                <ScrollButton aria-label="Sinistra"><Icon n="left" s={7} /></ScrollButton>
                <Thumb />
                <ScrollButton aria-label="Destra"><Icon n="right" s={7} /></ScrollButton>
              </HScroll>
              <Tabs>
                <Tab><Icon n="active" s={10} />Tutte le attiv...</Tab>
                <Tab $on><Icon n="clipb" s={10} />NULL</Tab>
              </Tabs>
            </LeftPanel>
            <Mdi>
              <ViewWindow>
                <TitleBar $h={18}>
                  <Icon n="view" s={9} />
                  <span>Vista 1, Predefinito [Grafica software] - Scala di zoom = 1:8</span>
                  <WindowButtons />
                </TitleBar>
                <ViewTools>
                  <IconButton $w={14} aria-label="Viste"><Icon n="pages" s={12} /></IconButton>
                  <Caret />
                  <IconButton $w={15} aria-label="Globo"><Icon n="viewglobe" s={11} /></IconButton>
                  <IconButton $w={13} aria-label="Luminosità"><Icon n="sun" s={12} /></IconButton>
                  <Caret />
                  <Sep $m={2} />
                  {["brushsm", "zin", "zout", "rect", "fit", "fitb", "wand"].map((n) => (
                    <IconButton key={n} $w={14} aria-label={n}><Icon n={n} s={11} /></IconButton>
                  ))}
                  <Sep $m={2} />
                  {["prev", "next"].map((n) => <IconButton key={n} $w={14} aria-label={n}><Icon n={n} s={11} /></IconButton>)}
                  <Sep $m={2} />
                  {["copyv", "walk", "clip"].map((n) => <IconButton key={n} $w={14} aria-label={n}><Icon n={n} s={11} /></IconButton>)}
                </ViewTools>
                <CityMap />
              </ViewWindow>
            </Mdi>
            <Sidebar>
              <SideList>
                {sideItems.map(([n, t]) => <SideItem key={t}><Icon n={n} s={15} />{t}</SideItem>)}
              </SideList>
            </Sidebar>
          </Workspace>

          <Bar>
            <BarGroup $h={23} $gap={0}>
              <Grip />
              <IconButton $w={20} aria-label="Indietro"><Icon n="back" s={13} /></IconButton>
              <Caret $light />
              <IconButton $w={20} aria-label="Avanti"><Icon n="fwd" s={13} /></IconButton>
              <Caret $light />
              <IconButton $w={17} aria-label="Assi"><Icon n="axis" s={12} /></IconButton>
              <Caret $light />
              <Pick id="viste" label="Viste" w={84} h={12} kind="blue" icon="viewset" options={["Viste predefinite", "Viste salvate"]} />
              <IconButton $w={24} aria-label="Gruppi di viste"><Icon n="views" /></IconButton>
              <Pager>
                {[1, 2, 3, 4, 5, 6, 7, 8].map((n) => <PageButton key={n} $on={n === 1}>{n}</PageButton>)}
              </Pager>
            </BarGroup>
            <BarGroup $h={23} $trail={9}>
              <Grip />
              <Coord>X<input defaultValue="15015.6892" /></Coord>
              <Coord>Y<input defaultValue="48819.1202" /></Coord>
            </BarGroup>
            <BarGroup $h={23} $lead={4} $trail={3}>
              <Grip />
              <Pick id="comando" label="Comando" w={137} h={13} options={[" ", "move"]} />
              <IconButton $w={20} aria-label="Esegui"><Icon n="keyin" /></IconButton>
              <IconButton aria-label="Cerca"><Icon n="keyfind" /></IconButton>
              <Caret />
            </BarGroup>
          </Bar>

          <StatusBar>
            <StatusCell $w={257} />
            <StatusCell $pad={17}>Colore evidenziazione = RED</StatusCell>
            <StatusCell $w={18}><Icon n="link" s={9} /></StatusCell>
            <StatusCell $w={92}><Icon n="lock" s={9} />Livello 1</StatusCell>
            <StatusCell $w={67}><Icon n="cursor" s={9} />: 1</StatusCell>
            <StatusCell $w={19} />
            <StatusCell $w={18} />
            <StatusCell $w={18} />
            <StatusCell $w={18}><Icon n="saveg" s={10} /></StatusCell>
            <StatusCell $w={18}><Icon n="homeg" s={10} /></StatusCell>
            <StatusCell $w={17} />
          </StatusBar>
        </AppWindow>

        <TaskBar>
          <StartButton><Icon n="flag" s={12} />start</StartButton>
          <Task><Icon n="app" s={11} />try_amegliaEIRA2.dg...</Task>
          <Task $on><Icon n="console" s={10} />form_risultato_identif...</Task>
          <Lang>IT</Lang>
          <Tray><Icon n="chev" s={9} /><Icon n="net" s={10} /><span>16.27</span></Tray>
        </TaskBar>

        <ResultsDialog />
      </Screen>
      <Arrow>
        <ArrowText>Selezionare più record<br />contemporaneamente …</ArrowText>
      </Arrow>
    </Slide>
  );
}
